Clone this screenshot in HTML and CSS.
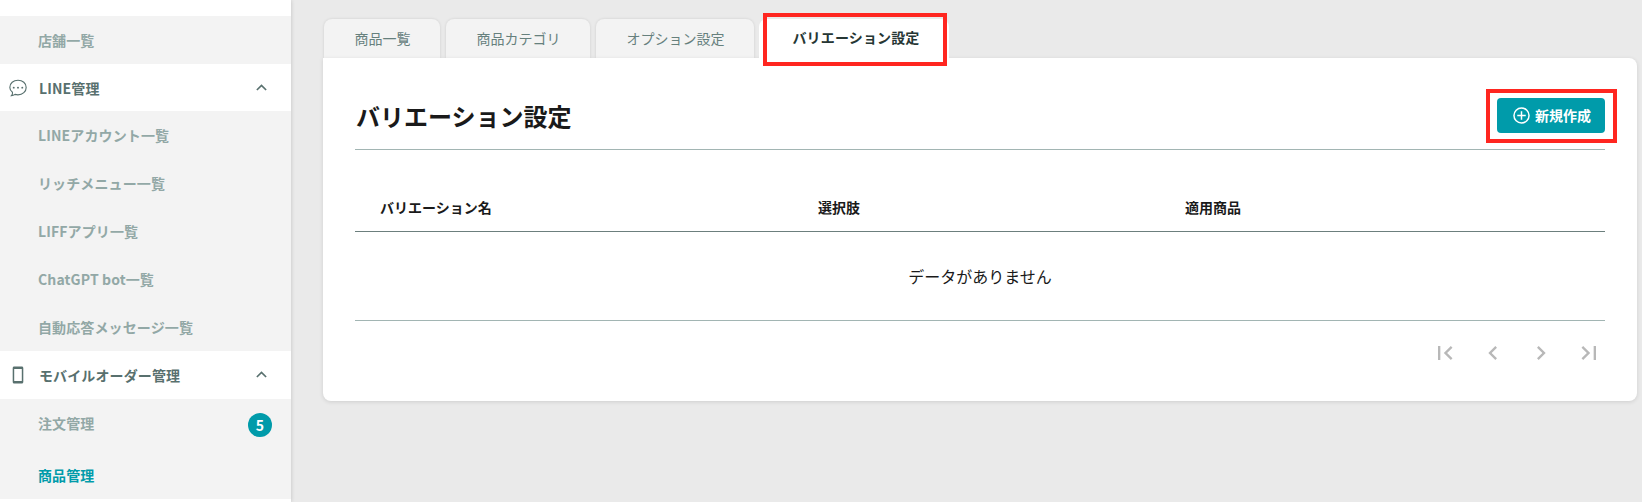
FILE: index.html
```html
<!DOCTYPE html>
<html lang="ja">
<head>
<meta charset="utf-8">
<title>バリエーション設定</title>
<link rel="stylesheet" href="styles.css">
</head>
<body>
<div class="app">
  <nav class="sidebar">
    <a class="item item-store">店舗一覧</a>
    <div class="group group-line">
      <svg class="group-icon" viewBox="0 0 24 24" fill="none" stroke="currentColor" stroke-width="1.5"><path d="M3.3 22.2c1.500-1.500 1.700-2.700 1.300-4.500C2.400 16 1.100 13.800 1.100 11.200 1.100 5.600 5.800 1.700 12 1.700s10.900 3.900 10.900 9.500-4.700 9.900-10.900 9.900c-1.500 0-2.800-.2-4-.6-1.500 1-3 1.600-4.700 1.700z"/><g fill="currentColor" stroke="none"><circle cx="6.300" cy="11.500" r="1.300"/><circle cx="12" cy="11.500" r="1.300"/><circle cx="17.700" cy="11.500" r="1.300"/></g></svg>
      <span>LINE管理</span>
      <svg class="chevron" viewBox="0 0 10 6"><path d="M.8 5.300 5 1.100l4.200 4.200"/></svg>
    </div>
    <a class="item">LINEアカウント一覧</a>
    <a class="item">リッチメニュー一覧</a>
    <a class="item">LIFFアプリ一覧</a>
    <a class="item">ChatGPT bot一覧</a>
    <a class="item">自動応答メッセージ一覧</a>
    <div class="group">
      <svg class="group-icon" viewBox="0 0 18 18" fill="currentColor"><path fill-rule="evenodd" d="M5.200.5h7.600c.9 0 1.500.6 1.500 1.500v14c0 .9-.6 1.500-1.500 1.500H5.200c-.9 0-1.500-.6-1.500-1.500V2C3.700 1.100 4.300.5 5.200.5zM5.200 3.100v11.800h7.600V3.100z"/></svg>
      <span>モバイルオーダー管理</span>
      <svg class="chevron" viewBox="0 0 10 6"><path d="M.8 5.300 5 1.100l4.200 4.200"/></svg>
    </div>
    <a class="item item-orders"><span class="label">注文管理</span><span class="badge">5</span></a>
    <a class="item active">商品管理</a>
  </nav>
  <main class="main">
    <div class="tabs">
      <a class="tab tab-products">商品一覧</a>
      <a class="tab tab-category">商品カテゴリ</a>
      <a class="tab tab-options">オプション設定</a>
      <a class="tab current">バリエーション設定<span class="mark mark-tab"></span></a>
    </div>
    <section class="card">
      <header class="card-head">
        <h1>バリエーション設定</h1>
        <button class="create" type="button">
          <svg viewBox="0 0 16 16" fill="none" stroke="currentColor" stroke-width="1.400"><circle cx="8" cy="8" r="7.100"/><path d="M8 4v8M4 8h8"/></svg>
          <span>新規作成</span>
          <span class="mark mark-create"></span>
        </button>
      </header>
      <div class="thead"><span>バリエーション名</span><span>選択肢</span><span>適用商品</span></div>
      <div class="empty">データがありません</div>
      <div class="pager">
        <svg viewBox="0 0 24 24"><path d="M18.410 16.590 13.820 12l4.590-4.590L17 6l-6 6 6 6zM6 6h2v12H6z"/></svg>
        <svg viewBox="0 0 24 24"><path d="M15.410 7.410 14 6l-6 6 6 6 1.410-1.410L10.830 12z"/></svg>
        <svg viewBox="0 0 24 24"><path d="M10 6 8.590 7.410 13.170 12l-4.580 4.590L10 18l6-6z"/></svg>
        <svg viewBox="0 0 24 24"><path d="M5.590 7.410 10.180 12l-4.590 4.590L7 18l6-6-6-6zM16 6h2v12h-2z"/></svg>
      </div>
    </section>
  </main>
</div>
</body>
</html>
```
FILE: styles.css
```css
* { box-sizing: border-box; }
body {
  margin: 0;
  background: #eaeaea;
  color: #1a1a1a;
  font-family: "Noto Sans CJK JP", "Noto Sans", sans-serif;
  font-size: 14px;
}
.app { display: flex; height: 502px; overflow: hidden; }

.sidebar {
  flex: none;
  width: 291px;
  padding-top: 16px;
  background: #fff;
  box-shadow: 0 0 4px rgba(0, 0, 0, .18);
  font-weight: 700;
  letter-spacing: .12px;
}
.item {
  display: flex;
  align-items: center;
  justify-content: space-between;
  height: 48px;
  padding: 0 19px 0 38px;
  background: #f3f3f3;
  color: #92a8a6;
}
.item-store { padding-bottom: 1px; }
.item-orders { height: 52px; }
.item-orders .label { padding-bottom: 4px; }
.item.active { color: #009baa; }
.group {
  display: flex;
  align-items: center;
  height: 48px;
  padding: 0 24px 0 9px;
  color: #58706e;
}
.group-line { height: 47px; }
.group-icon { width: 18px; height: 18px; margin-right: 12px; }
.chevron {
  width: 11px;
  height: 7px;
  margin: 0 0 1px auto;
  fill: none;
  stroke: currentColor;
  stroke-width: 1.5;
}
.badge {
  width: 24px;
  height: 24px;
  border-radius: 50%;
  background: #009baa;
  color: #fff;
  line-height: 24px;
  text-align: center;
}

.main { flex: 1; padding: 19px 5px 0 32px; }
.tabs { display: flex; gap: 6px; height: 39px; padding-left: 1px; }
.tab {
  display: flex;
  align-items: center;
  justify-content: center;
  padding: 0 0 1px 1px;
  border-radius: 8px 8px 0 0;
  background: #f3f3f3;
  box-shadow: 0 0 3px rgba(0, 0, 0, .12);
  color: #66807d;
}
.tab-products { width: 116px; }
.tab-category { width: 144px; }
.tab-options { width: 158px; }
.tab.current {
  position: relative;
  width: 190px;
  margin-left: -1px;
  padding: 0 0 3px 4px;
  background: #fff;
  color: #263634;
  font-weight: 700;
  letter-spacing: .15px;
  z-index: 1;
  box-shadow: none;
}
.mark { position: absolute; border: 4px solid #ff2620; }
.mark-tab { top: -6px; left: 4px; width: 184px; height: 53px; }
.mark-create { inset: -9px -12px -10px -11px; }

.card {
  position: relative;
  height: 343px;
  padding: 0 32px;
  border-radius: 0 8px 8px 8px;
  background: #fff;
  box-shadow: 0 1px 4px rgba(0, 0, 0, .12);
}
.card-head {
  display: flex;
  align-items: center;
  justify-content: space-between;
  height: 92px;
  padding-top: 24px;
  border-bottom: 1px solid #a2b5b3;
}
h1 { margin: 0; padding-left: 1px; font-size: 24px; font-weight: 700; line-height: 36px; }
.create {
  position: relative;
  display: flex;
  align-items: center;
  width: 108px;
  height: 35px;
  padding: 0 0 1px 16px;
  border: 0;
  border-radius: 4px;
  background: #009baa;
  color: #fff;
  font: inherit;
  font-weight: 700;
}
.create svg { width: 17px; height: 17px; margin-right: 5px; }
.thead {
  display: grid;
  grid-template-columns: 438px 367px 1fr;
  align-items: center;
  height: 82px;
  padding: 32px 0 0 25px;
  border-bottom: 1px solid #6c7f7d;
  font-weight: 700;
}
.empty {
  display: flex;
  align-items: center;
  justify-content: center;
  height: 89px;
  border-bottom: 1px solid #a2b5b3;
  font-size: 16px;
}
.pager {
  display: flex;
  justify-content: flex-end;
  gap: 20px;
  padding: 18px 2px 0 0;
  fill: #b8b8b8;
}
.pager svg { width: 28px; height: 28px; }
```
